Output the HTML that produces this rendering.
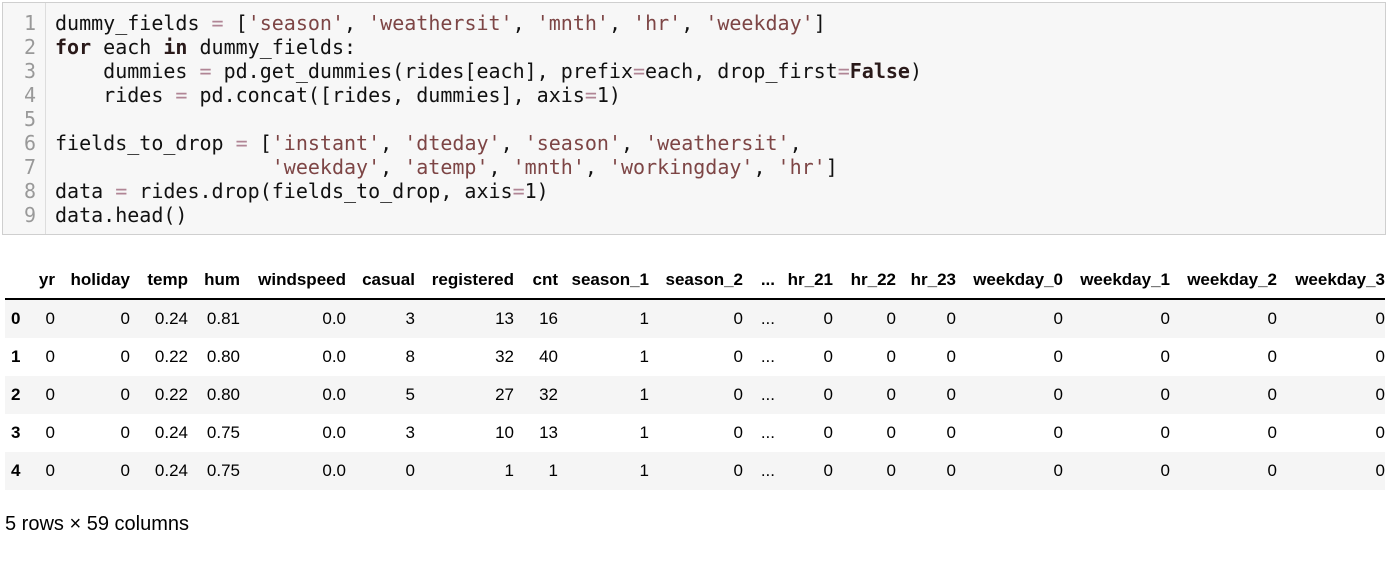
<!DOCTYPE html><html><head><meta charset="utf-8"><style>
body{margin:0;width:1400px;height:561px;background:#fff;position:relative;overflow:hidden;font-family:"Liberation Sans",Arial,sans-serif;color:#000}
.code{position:absolute;left:2px;top:2px;width:1382px;height:231px;background:#f7f7f7;border:1px solid #cfcfcf;}
.gut{position:absolute;left:0;top:0;width:42px;height:231px;border-right:1px solid #ddd;}
pre{margin:0;position:absolute;top:8px;font-family:"DejaVu Sans Mono","Liberation Mono",monospace;font-size:20px;line-height:24px;}
.ln{left:0;width:33px;text-align:right;color:#999}
.src{left:52px;color:#111}
.k{color:#2a1a1a;font-weight:bold}.s{color:#7d4545}.o{color:#b08595}
table{position:absolute;left:5px;top:262px;border-collapse:collapse;table-layout:fixed;font-size:17px;width:1380px}
td,th{text-align:right;padding:0;height:38px;white-space:nowrap}
th{font-weight:bold}
thead th{height:36px;border-bottom:2px solid #000}
tbody tr:nth-child(odd){background:#f5f5f5}
tbody th{text-align:left;padding-left:6px}
.foot{position:absolute;left:5px;top:513px;font-size:20px}
</style></head><body>
<div class="code"><div class="gut"></div>
<pre class="ln">1
2
3
4
5
6
7
8
9</pre>
<pre class="src">dummy_fields <span class="o">=</span> [<span class="s">'season'</span>, <span class="s">'weathersit'</span>, <span class="s">'mnth'</span>, <span class="s">'hr'</span>, <span class="s">'weekday'</span>]
<span class="k">for</span> each <span class="k">in</span> dummy_fields:
    dummies <span class="o">=</span> pd.get_dummies(rides[each], prefix<span class="o">=</span>each, drop_first<span class="o">=</span><span class="k">False</span>)
    rides <span class="o">=</span> pd.concat([rides, dummies], axis<span class="o">=</span>1)

fields_to_drop <span class="o">=</span> [<span class="s">'instant'</span>, <span class="s">'dteday'</span>, <span class="s">'season'</span>, <span class="s">'weathersit'</span>,
                  <span class="s">'weekday'</span>, <span class="s">'atemp'</span>, <span class="s">'mnth'</span>, <span class="s">'workingday'</span>, <span class="s">'hr'</span>]
data <span class="o">=</span> rides.drop(fields_to_drop, axis<span class="o">=</span>1)
data.head()</pre></div>
<table>
<colgroup><col style="width:25px"><col style="width:25px"><col style="width:75px"><col style="width:58px"><col style="width:52px"><col style="width:106px"><col style="width:69px"><col style="width:99px"><col style="width:44px"><col style="width:91px"><col style="width:94px"><col style="width:32px"><col style="width:58px"><col style="width:63px"><col style="width:60px"><col style="width:107px"><col style="width:107px"><col style="width:107px"><col style="width:108px"></colgroup>
<thead><tr><th></th><th>yr</th><th>holiday</th><th>temp</th><th>hum</th><th>windspeed</th><th>casual</th><th>registered</th><th>cnt</th><th>season_1</th><th>season_2</th><th>...</th><th>hr_21</th><th>hr_22</th><th>hr_23</th><th>weekday_0</th><th>weekday_1</th><th>weekday_2</th><th>weekday_3</th></tr></thead>
<tbody>
<tr><th>0</th><td>0</td><td>0</td><td>0.24</td><td>0.81</td><td>0.0</td><td>3</td><td>13</td><td>16</td><td>1</td><td>0</td><td>...</td><td>0</td><td>0</td><td>0</td><td>0</td><td>0</td><td>0</td><td>0</td></tr>
<tr><th>1</th><td>0</td><td>0</td><td>0.22</td><td>0.80</td><td>0.0</td><td>8</td><td>32</td><td>40</td><td>1</td><td>0</td><td>...</td><td>0</td><td>0</td><td>0</td><td>0</td><td>0</td><td>0</td><td>0</td></tr>
<tr><th>2</th><td>0</td><td>0</td><td>0.22</td><td>0.80</td><td>0.0</td><td>5</td><td>27</td><td>32</td><td>1</td><td>0</td><td>...</td><td>0</td><td>0</td><td>0</td><td>0</td><td>0</td><td>0</td><td>0</td></tr>
<tr><th>3</th><td>0</td><td>0</td><td>0.24</td><td>0.75</td><td>0.0</td><td>3</td><td>10</td><td>13</td><td>1</td><td>0</td><td>...</td><td>0</td><td>0</td><td>0</td><td>0</td><td>0</td><td>0</td><td>0</td></tr>
<tr><th>4</th><td>0</td><td>0</td><td>0.24</td><td>0.75</td><td>0.0</td><td>0</td><td>1</td><td>1</td><td>1</td><td>0</td><td>...</td><td>0</td><td>0</td><td>0</td><td>0</td><td>0</td><td>0</td><td>0</td></tr>
</tbody></table>
<div class="foot">5 rows × 59 columns</div>
</body></html>
